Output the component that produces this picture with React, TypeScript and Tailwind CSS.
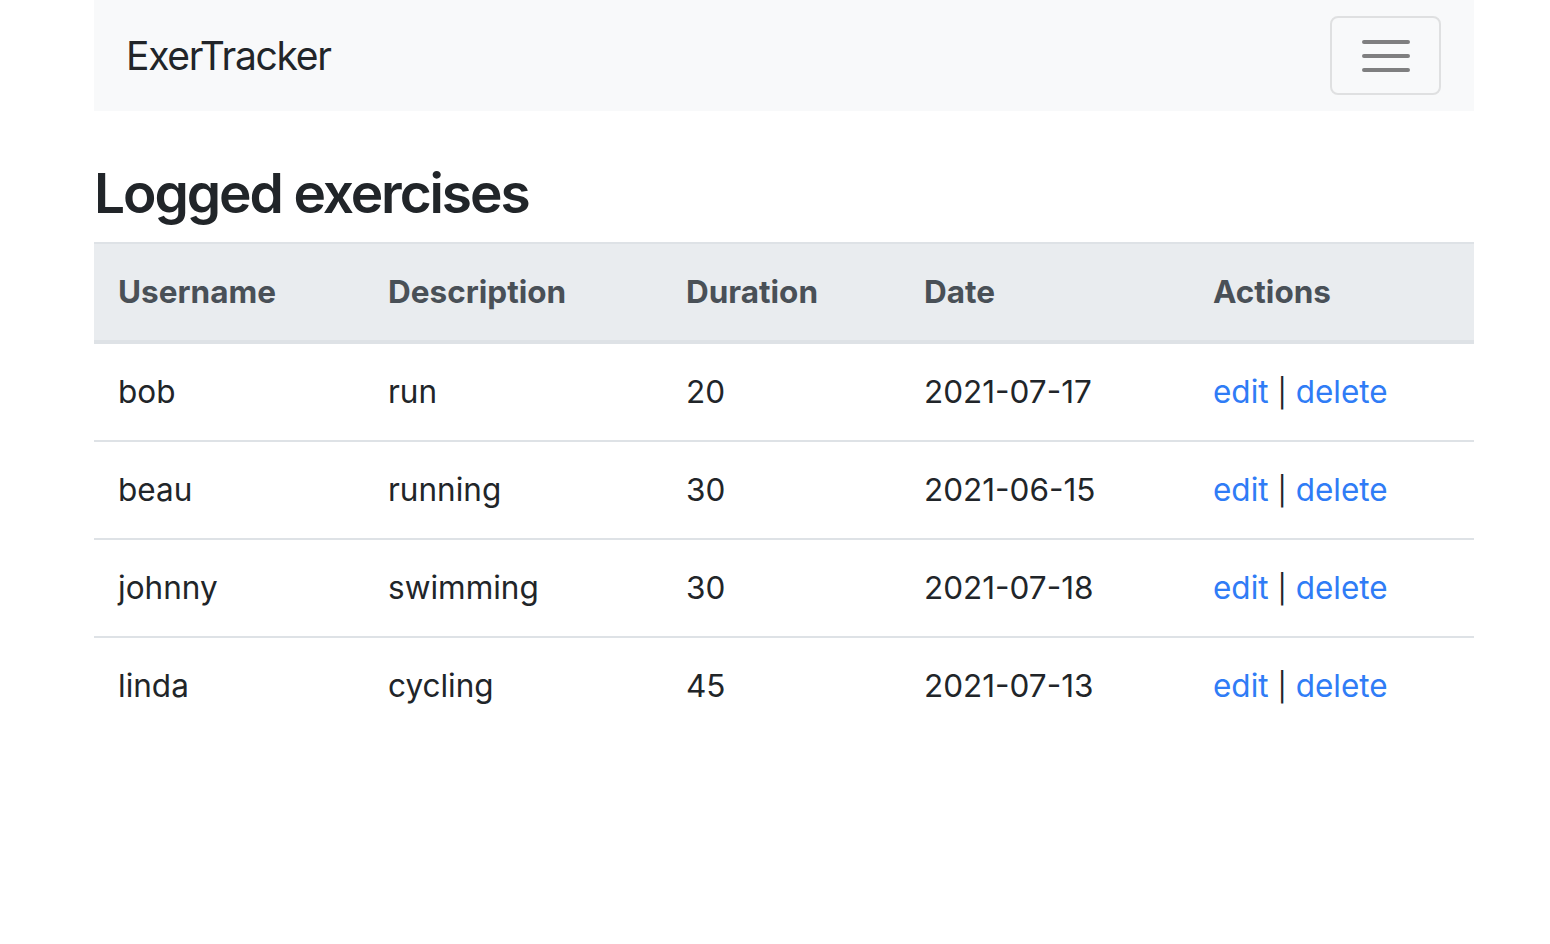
import React from "react";

const exercises = [
  { username: "bob", description: "run", duration: 20, date: "2021-07-17" },
  { username: "beau", description: "running", duration: 30, date: "2021-06-15" },
  { username: "johnny", description: "swimming", duration: 30, date: "2021-07-18" },
  { username: "linda", description: "cycling", duration: 45, date: "2021-07-13" },
];

function Navbar() {
  return (
    <nav className="flex h-[111px] items-center justify-between bg-[#f8f9fa] pl-8 pr-[33px]">
      <a href="#" className="text-[39px] leading-none tracking-[-1.3px] text-[#212529]">
        ExerTracker
      </a>
      <button className="flex h-[79px] w-[111px] items-center justify-center rounded-[8px] border-2 border-[#dfe0e1]">
        <svg width="48" height="36" viewBox="0 0 48 36">
          <path d="M2 4h44M2 18h44M2 32h44" stroke="#7f7f80" strokeWidth="4" strokeLinecap="round" />
        </svg>
      </button>
    </nav>
  );
}

function ExercisesList() {
  return (
    <div className="pt-[49px]">
      <h3 className="mb-4 text-[55px] leading-[1.2] font-semibold tracking-[-2.1px] text-[#212529]">
        Logged exercises
      </h3>
      <table className="w-full table-fixed border-collapse text-[31.5px] leading-[48px] text-[#212529]">
        <colgroup>
          <col className="w-[270px]" />
          <col className="w-[298px]" />
          <col className="w-[238px]" />
          <col className="w-[289px]" />
          <col className="w-[285px]" />
        </colgroup>
        <thead>
          <tr className="border-t-2 border-b-4 border-[#dee2e6] bg-[#e9ecef] text-left font-bold text-[#495057]">
            <th className="px-6 py-6">Username</th>
            <th className="px-6 py-6">Description</th>
            <th className="px-6 py-6">Duration</th>
            <th className="px-6 py-6">Date</th>
            <th className="px-6 py-6">Actions</th>
          </tr>
        </thead>
        <tbody>
          {exercises.map((ex, i) => (
            <tr key={ex.username} className={i < exercises.length - 1 ? "border-b-2 border-[#dee2e6]" : ""}>
              <td className="px-6 py-6">{ex.username}</td>
              <td className="px-6 py-6">{ex.description}</td>
              <td className="px-6 py-6">{ex.duration}</td>
              <td className="px-6 py-6">{ex.date}</td>
              <td className="px-6 py-6">
                <a href="#" className="text-[#2f7cf6]">edit</a>{" "}
                <span className="text-[28px] leading-none">|</span>{" "}
                <a href="#" className="text-[#2f7cf6]">delete</a>
              </td>
            </tr>
          ))}
        </tbody>
      </table>
    </div>
  );
}

export default function App() {
  return (
    <div className="min-h-[944px] bg-white font-['Inter',sans-serif]">
      <div className="ml-[94px] w-[1380px]">
        <Navbar />
        <ExercisesList />
      </div>
    </div>
  );
}
